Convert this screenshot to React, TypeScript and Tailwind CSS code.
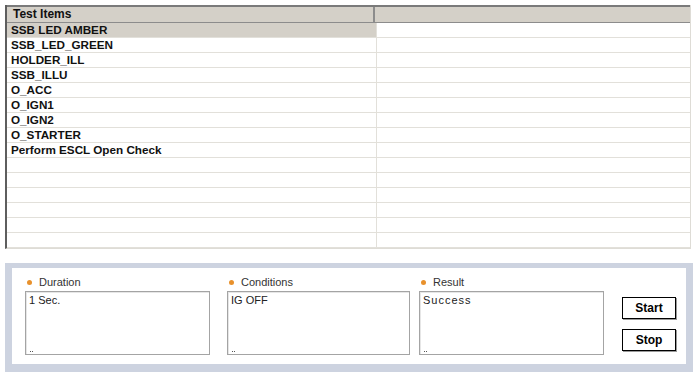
import React from "react";

const items = [
    "SSB LED AMBER",
    "SSB_LED_GREEN",
    "HOLDER_ILL",
    "SSB_ILLU",
    "O_ACC",
    "O_IGN1",
    "O_IGN2",
    "O_STARTER",
    "Perform ESCL Open Check",
];

const rows = Array.from({ length: 15 }, (_, i) => items[i] ?? "");

function Field({ label, value, width, className }: { label: string; value: string; width: string; className?: string }) {
    return (
        <div className={`${width} ${className ?? ""} flex flex-col`}>
            <div className="flex h-[13px] items-center pl-[2px]">
                <span className="h-[5px] w-[5px] rounded-full bg-[#e8912c]" />
                <span className="ml-[7px] text-[11px] leading-[13px] text-[#333]">{label}</span>
            </div>
            <div className="mt-[2px] flex h-[64px] flex-col justify-between border border-[#a4a4a4] bg-white pb-[2px] pl-[3px] pt-[2px] shadow-[inset_1px_1px_0_#e6e6e6]">
                <span className={`text-[11px] leading-[13px] text-[#222] ${value === "Success" ? "tracking-[1px]" : ""}`}>{value}</span>
                <div className="flex gap-[1px] pl-[1px]">
                    <span className="h-[1px] w-[1px] bg-[#555]" />
                    <span className="h-[1px] w-[1px] bg-[#555]" />
                </div>
            </div>
        </div>
    );
}

function PanelButton({ children }: { children: React.ReactNode }) {
    return (
        <button className="h-[22px] w-[54px] border border-black bg-white text-[12px] font-bold leading-[20px] text-black shadow-[1px_1px_0_#9a9a9a]">
            {children}
        </button>
    );
}

export default function App() {
    return (
        <div className="h-[377px] w-[700px] overflow-hidden bg-white font-['Liberation_Sans',Arial,sans-serif]">
            <div className="pl-[5px] pt-[5px]">
                {/* Grid */}
                <div className="w-[686px] border-b border-l-2 border-r border-b-[#dedcd6] border-l-[#5e5e5e] border-r-[#dedcd6]">
                    <div className="flex h-[18px] border-b border-t-2 border-b-[#8c8c8c] border-t-[#7a7a7a] bg-[#d4d0c8]">
                        <div className="w-[368px] border-r-2 border-r-[#8c8c8c] pl-[6px] text-[12px] font-bold leading-[15px] text-[#111]">
                            Test Items
                        </div>
                        <div className="flex-1" />
                    </div>
                    {rows.map((name, i) => (
                        <div key={i} className="flex h-[15px] border-b border-b-[#e2e0da]">
                            <div
                                className={`w-[370px] border-r border-r-[#e2e0da] pl-[4px] text-[11.7px] font-bold leading-[14px] text-[#111] ${
                                    i === 0 ? "bg-[#d4d0c8]" : ""
                                }`}
                            >
                                {name}
                            </div>
                            <div className="flex-1" />
                        </div>
                    ))}
                </div>

                {/* Bottom panel */}
                <div className="mt-[14px] w-[688px] bg-[#cdd3e0] pb-[8px] pl-[7px] pr-[7px] pt-[5px]">
                    <div className="flex h-[96px] items-start bg-white pl-[13px] pt-[8px]">
                        <Field label="Duration" value="1 Sec." width="w-[185px]" />
                        <Field label="Conditions" value="IG OFF" width="w-[183px]" className="ml-[17px]" />
                        <Field label="Result" value="Success" width="w-[185px]" className="ml-[9px]" />
                        <div className="ml-[18px] mt-[21px] flex flex-col gap-[10px]">
                            <PanelButton>Start</PanelButton>
                            <PanelButton>Stop</PanelButton>
                        </div>
                    </div>
                </div>
            </div>
        </div>
    );
}
